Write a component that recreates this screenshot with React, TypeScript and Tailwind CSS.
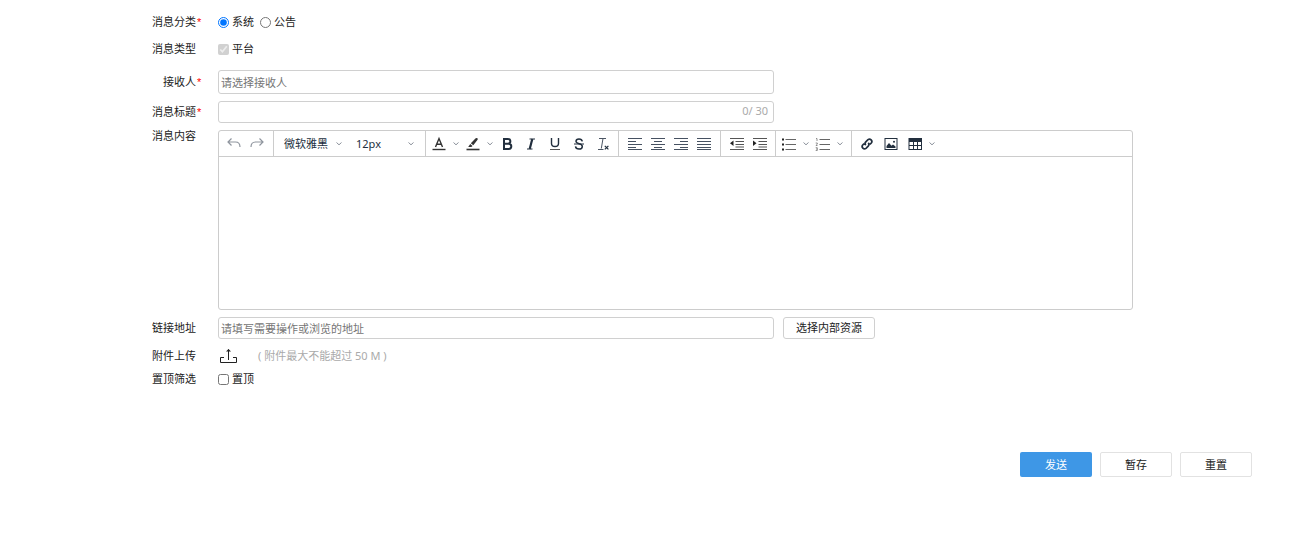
import { useState } from "react";
import type { ReactNode } from "react";

type RowProps = {
  label: string;
  htmlFor?: string;
  required?: boolean;
  className?: string;
  labelClass?: string;
  children: ReactNode;
};

function Row({ label, htmlFor, required, className = "", labelClass = "", children }: RowProps) {
  return (
    <div className={`flex items-center ${className}`}>
      <div className={`flex w-[68px] shrink-0 items-center justify-end pr-4 ${labelClass}`}>
        {htmlFor ? <label htmlFor={htmlFor}>{label}</label> : <span>{label}</span>}
        <span className={`w-1.5 pl-px font-["Liberation_Sans",sans-serif] text-[#f00]`}>{required && "*"}</span>
      </div>
      <div className="flex min-w-0 flex-1 items-center">{children}</div>
    </div>
  );
}

function Chevron({ className = "" }: { className?: string }) {
  return (
    <svg className={className} width="10" height="10" viewBox="0 0 10 10" fill="none" stroke="#8b919b">
      <path d="M2.500 3.500 5 5.800l2.500-2.300" />
    </svg>
  );
}

function Tool({ title, menu, narrow, children }: { title: string; menu?: boolean; narrow?: boolean; children: ReactNode }) {
  return (
    <button type="button" title={title} aria-label={title} className="flex h-full items-center">
      <span className={`flex justify-center ${narrow ? "w-[23px]" : "w-6"}`}>
        <svg width="16" height="16" viewBox="0 0 16 16" fill="none" stroke="#222f3e">
          {children}
        </svg>
      </span>
      {menu && <Chevron />}
    </button>
  );
}

function Group({ className = "", children }: { className?: string; children: ReactNode }) {
  return <div className={`flex h-full items-center border-r border-[#ccc] ${className}`}>{children}</div>;
}

const aligns = [
  { title: "左对齐", d: "M1 5.5h8M1 11.5h8" },
  { title: "居中", d: "M4 5.5h8M4 11.5h8" },
  { title: "右对齐", d: "M7 5.5h8M7 11.5h8" },
  { title: "两端对齐", d: "M1 5.5h14M1 11.5h14" },
];

function Toolbar() {
  return (
    <div className="flex h-[26px] items-center border-b border-[#ccc]">
      <Group className="pr-[5px] pl-[3px]">
        <Tool title="撤销" narrow>
          <path d="M5.500 2.500 2 6l3.500 3.500M2 6h7.500c3 0 4.500 2 4.500 5" stroke="#8f959e" strokeWidth="1.2" />
        </Tool>
        <Tool title="重做" narrow>
          <path d="M10.500 2.500 14 6l-3.500 3.500M14 6H6.500C3.500 6 2 8 2 11" stroke="#8f959e" strokeWidth="1.2" />
        </Tool>
      </Group>

      <Group className="pr-[9px] pl-2.5">
        <div className="relative w-[72px]">
          <select aria-label="字体" className="w-full appearance-none bg-transparent text-[#222f3e]">
            <option>微软雅黑</option>
            <option>宋体</option>
          </select>
          <Chevron className="pointer-events-none absolute top-1/2 right-3 -translate-y-1/2" />
        </div>
        <div className="relative w-[60px]">
          <select aria-label="字号" className="w-full appearance-none bg-transparent text-[#222f3e]">
            <option>12px</option>
            <option>14px</option>
          </select>
          <Chevron className="pointer-events-none absolute top-1/2 right-0 -translate-y-1/2" />
        </div>
      </Group>

      <Group className="pr-[3px] pl-px">
        <Tool title="文字颜色" menu>
          <path d="M4.500 11 8 2.500l3.500 8.500M5.700 8.300h4.600" strokeWidth="1.4" stroke="#333" />
          <path d="M1.500 13.500h13" strokeWidth="1.400" stroke="#333" />
        </Tool>
        <Tool title="背景颜色" menu>
          <path d="M10.700 2.300q.8-.8 1.700 0t0 1.700L8.300 9.300 5.800 7.300zM5.200 7.900l2.400 2-1.300 1.200H3.200z" fill="#333" stroke="none" />
          <path d="M1.500 13.500h13" strokeWidth="1.600" stroke="#333" />
        </Tool>
        <Tool title="粗体">
          <path d="M5 3h4a2.300 2.300 0 0 1 0 4.700H5zm0 4.700h4.700a2.600 2.600 0 0 1 0 5.200H5z" strokeWidth="2" />
        </Tool>
        <Tool title="斜体">
          <path d="M6.500 3h5.500M4 13h5.500" strokeWidth="1.200" />
          <path d="M9.300 3 6.700 13" strokeWidth="2.200" />
        </Tool>
        <Tool title="下划线">
          <path d="M4.500 2v5.500a3.500 3 0 0 0 7 0V2" strokeWidth="1.400" />
          <path d="M3 13.500h10" stroke="#555" />
        </Tool>
        <Tool title="删除线">
          <path d="M11.300 5.300C11 3.800 9.800 3 8 3 6.200 3 5 3.900 5 5.300 5 8.500 11.300 7 11.300 10.400 11.300 12 10 13 8 13s-3.300-1-3.500-2.600" strokeWidth="1.500" />
          <path d="M3 8h10" />
        </Tool>
        <Tool title="清除格式">
          <path d="M4 2.500h7M8 2.500 6.300 12.500M3 13.500h5.500" stroke="#4b5563" />
          <path d="m9.800 9.800 3.600 3.600M13.400 9.800l-3.600 3.600" strokeWidth="1.200" />
        </Tool>
      </Group>

      <Group className="pr-[5px] pl-1">
        {aligns.map((a) => (
          <Tool key={a.title} title={a.title} narrow>
            <path d={`M1 2.5h14M1 8.5h14M1 13.5h14${a.d}`} stroke="#465161" />
          </Tool>
        ))}
      </Group>

      <Group className="px-1">
        <Tool title="减少缩进" narrow>
          <path d="M1 2.500h14M6.500 5.500H15M6.500 8.500H15M6.500 11H15M1 13.500h14" stroke="#555" />
          <path d="M4.500 4.500v5.500L1 7.200z" fill="#222" stroke="none" />
        </Tool>
        <Tool title="增加缩进" narrow>
          <path d="M1 2.500h14M6.500 5.500H15M6.500 8.500H15M6.500 11H15M1 13.500h14" stroke="#555" />
          <path d="M1 4.500v5.500l3.500-2.800z" fill="#222" stroke="none" />
        </Tool>
      </Group>

      <Group className="pr-1.5 pl-px">
        <Tool title="项目列表" menu>
          <path d="M4.500 3.500H15M4.500 8.500H15M4.500 13.500H15" stroke="#666" />
          <path d="M1 3.500h2M1 8.500h2M1 13.500h2" stroke="#222" strokeWidth="1.800" />
        </Tool>
        <Tool title="编号列表" menu>
          <path d="M4.500 3.500H15M4.500 8.500H15M4.500 13.500H15" stroke="#666" />
          <path d="M1 2.500h1v2.500M.7 7h1.600v1.200L.9 9.500h1.600M.7 11.700h1.600v2.800H.7M1 13h1.300" stroke="#777" strokeWidth=".8" />
        </Tool>
      </Group>

      <div className="flex h-full items-center pl-[3px]">
        <Tool title="链接">
          <path
            d="M6.800 9.200a2.400 2.400 0 0 1 0-3.300l2.200-2.200a2.350 2.350 0 0 1 3.300 3.300l-1.400 1.400M9.200 6.800a2.400 2.400 0 0 1 0 3.300L7 12.300A2.350 2.350 0 0 1 3.700 9l1.400-1.400"
            strokeWidth="1.700"
          />
        </Tool>
        <Tool title="图片">
          <rect x="2" y="2.500" width="12" height="11" />
          <path d="M3.500 12V10L6 7l2.500 2.800L10 8.500l2.500 2V12z" fill="#222f3e" stroke="none" />
          <circle cx="11" cy="5.800" r="1" fill="#222f3e" stroke="none" />
        </Tool>
        <Tool title="表格" menu>
          <rect x="2" y="2.500" width="12.500" height="11" />
          <path d="M2 2.500h12.500V6H2z" fill="#222f3e" stroke="none" />
          <path d="M2 9.500h12.500M6.500 6v7.500M10.500 6v7.500" />
        </Tool>
      </div>
    </div>
  );
}

const inputClass = "w-full max-w-[556px] rounded-[3px] border border-[#d0d0d0] px-0.5 outline-none placeholder:text-[#757575]";
const boxClass = "mr-[3px] h-[11px] w-[11px]";

export default function App() {
  const [title, setTitle] = useState("");
  const [category, setCategory] = useState("system");

  return (
    <form
      className={`bg-white pt-2 pr-[57px] pl-[150px] font-["Noto_Sans","Noto_Sans_CJK_SC",sans-serif] text-[11px] leading-4 text-[#222]`}
      onSubmit={(e) => e.preventDefault()}
    >
      <div className="mr-[119px]">
        <Row label="消息分类" required className="h-7">
          <label className="mr-1.5 flex items-center">
            <input type="radio" name="category" className={boxClass} checked={category === "system"} onChange={() => setCategory("system")} />
            系统
          </label>
          <label className="flex items-center">
            <input type="radio" name="category" className={boxClass} checked={category === "notice"} onChange={() => setCategory("notice")} />
            公告
          </label>
        </Row>

        <Row label="消息类型" className="h-[26px]">
          <label className="flex items-center">
            <input type="checkbox" className={boxClass} defaultChecked disabled />
            平台
          </label>
        </Row>

        <Row label="接收人" htmlFor="receiver" required className="mt-2">
          <input id="receiver" className={`h-6 ${inputClass}`} placeholder="请选择接收人" />
        </Row>

        <Row label="消息标题" htmlFor="title" required className="mt-[7px]">
          <div className="relative w-full max-w-[556px]">
            <input id="title" maxLength={30} className={`block h-[22px] ${inputClass}`} value={title} onChange={(e) => setTitle(e.target.value)} />
            <span className="absolute top-0.5 right-1.5 text-[#aaa]">{title.length}/ 30</span>
          </div>
        </Row>

        <Row label="消息内容" htmlFor="content" className="mt-[7px] items-start" labelClass="h-3 self-start">
          <div className="w-full rounded-[3px] border border-[#ccc]">
            <Toolbar />
            <textarea id="content" className="block h-[152px] w-full resize-none px-2 py-1 outline-none" />
          </div>
        </Row>

        <Row label="链接地址" htmlFor="link" className="mt-[7px]">
          <input id="link" className={`h-[22px] ${inputClass}`} placeholder="请填写需要操作或浏览的地址" />
          <button type="button" className="ml-[9px] h-[22px] w-[92px] shrink-0 rounded-[3px] border border-[#d0d0d0]">
            选择内部资源
          </button>
        </Row>

        <Row label="附件上传" className="mt-[5px] h-6">
          <button type="button" aria-label="附件上传" className="mr-5 ml-0.5">
            <svg width="18" height="16" viewBox="0 0 18 16" fill="none" stroke="#222">
              <path d="M4 9.500H.5v5h16v-5H13" />
              <path d="M8.500 12V1.500" />
              <path d="M6 3.500 8.500 1 11 3.500z" fill="#222" stroke="none" />
            </svg>
          </button>
          <span className="text-[#aaa]">( 附件最大不能超过 50 M )</span>
        </Row>

        <Row label="置顶筛选" className="h-[22px]">
          <label className="flex items-center">
            <input type="checkbox" className={boxClass} />
            置顶
          </label>
        </Row>
      </div>

      <div className="mt-[62px] flex justify-end gap-2">
        <button type="submit" className="h-[25px] w-[72px] rounded-xs bg-[#3e97e6] text-white">
          发送
        </button>
        <button type="button" className="h-[25px] w-[72px] rounded-xs border border-[#e2e2e2]">
          暂存
        </button>
        <button type="reset" className="h-[25px] w-[72px] rounded-xs border border-[#e2e2e2]" onClick={() => setTitle("")}>
          重置
        </button>
      </div>
    </form>
  );
}
